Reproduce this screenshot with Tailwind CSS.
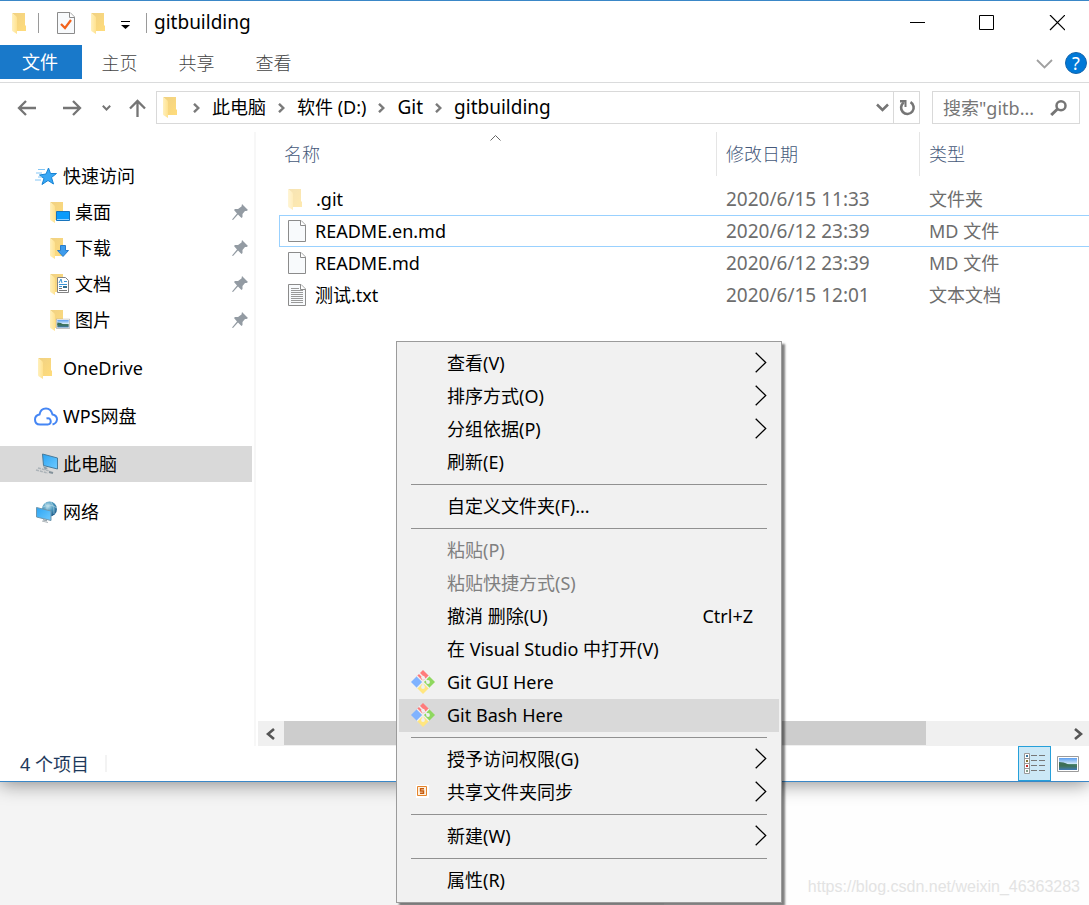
<!DOCTYPE html>
<html lang="zh-CN">
<head>
<meta charset="utf-8">
<title>gitbuilding</title>
<script src="https://cdn.jsdelivr.net/npm/@tailwindcss/browser@4"></script>
</head>
<body class="relative min-h-screen overflow-x-hidden bg-[linear-gradient(to_right,#f4f4f4_664px,#fefefe_664px)] font-['Noto_Sans','Noto_Sans_CJK_SC',sans-serif] text-[18px] leading-6 text-black">

<svg class="absolute h-0 w-0" aria-hidden="true">
  <defs>
    <linearGradient id="gold" x1="0" x2="1" y1="0" y2="1"><stop offset="0" stop-color="#f0d184"/><stop offset="1" stop-color="#ffdc7b"/></linearGradient>
    <linearGradient id="flap" x1="0" x2="1"><stop offset="0" stop-color="#fff0bd"/><stop offset="1" stop-color="#ffe28f"/></linearGradient>
    <linearGradient id="sky" x1="0" x2="1" y1="0" y2="1"><stop offset="0" stop-color="#2ba4f3"/><stop offset="1" stop-color="#6fcaff"/></linearGradient>
    <linearGradient id="photo" x1="0" x2="0" y1="0" y2="1"><stop offset="0" stop-color="#5b9ef0"/><stop offset=".5" stop-color="#d8ecfa"/><stop offset=".51" stop-color="#4f8a72"/><stop offset=".7" stop-color="#3f7360"/><stop offset="1" stop-color="#3f79b8"/></linearGradient>
    <radialGradient id="globe" cx=".4" cy=".3" r=".7"><stop offset="0" stop-color="#c5e4f0"/><stop offset=".5" stop-color="#4e9bc0"/><stop offset="1" stop-color="#1d5d8c"/></radialGradient>
    <symbol id="folder" viewBox="0 0 14 21"><path d="M0 0H13V12L14 13V18H4V4Z" fill="url(#gold)"/><path d="M0 0L4 3Q5 4 5 5V21L1 18.500Q0 18 0 17Z" fill="url(#flap)"/></symbol>
    <symbol id="page" viewBox="0 0 18 22"><path d="M.5.5H13L17.500 5V21.500H.5Z" fill="#f8fafc" stroke="#8b8b8b"/><path d="M12.500.5V5.500H17.500" fill="#fff" stroke="#8b8b8b"/></symbol>
    <symbol id="pin" viewBox="0 0 16 16"><path d="M10 0L16 6L14.500 7H13L10.500 10V13L9.500 14L6 10.500L1 16L0 15.500L5 9.500L2 6L3 5H6L9.500 2.500Z" fill="#939ba3"/></symbol>
    <symbol id="crumb" viewBox="0 0 7 10"><path d="M1 .8L5.300 5L1 9.200" fill="none" stroke="#7a7a7a" stroke-width="2.400"/></symbol>
    <symbol id="sub" viewBox="0 0 12 21"><path d="M.7.7L10.700 10.500L.7 20.300" fill="none" stroke="currentColor" stroke-width="1.300"/></symbol>
    <symbol id="git" viewBox="0 0 24 24">
      <path d="M12 0L18 6L12 12L6 6Z" fill="#ff7b7b"/><path d="M18 6L24 12L18 18L12 12Z" fill="#8fd85f"/><path d="M12 12L18 18L12 24L6 18Z" fill="#ffe680"/><path d="M6 6L12 12L6 18L0 12Z" fill="#80b3ff"/>
      <path d="M6 6L18 18M18 6L6 18" stroke="#f0f0f0" stroke-width="1.200"/><path d="M8 3L12 7V17M12 7L17 12" fill="none" stroke="#f0f0f0" stroke-width="1.500"/><circle cx="12" cy="7.500" r="1.800" fill="#f0f0f0"/><circle cx="12" cy="17" r="1.900" fill="#f0f0f0"/><circle cx="17" cy="12" r="1.900" fill="#f0f0f0"/>
    </symbol>
    <symbol id="picture" viewBox="0 0 22 16"><path d="M.5.5H21.500V15.500H.5Z" fill="#fff" stroke="#9b9b9b"/><path d="M2 2H20V14H2Z" fill="url(#photo)"/><path d="M2 6Q8 6 12 9L20 10H2Z" fill="#3d6f58"/></symbol>
  </defs>
</svg>

<section class="flex h-[782px] flex-col border-y border-y-[#3a87c7] bg-white shadow-[0_2px_18px_rgba(0,0,0,0.45)]" aria-label="gitbuilding">
  <header class="flex h-11 shrink-0 items-center pl-3">
    <svg class="h-[21px] w-[14px]"><use href="#folder"/></svg>
    <span class="ml-3 h-5 w-px bg-[#9a9a9a]"></span>
    <button class="ml-[18px]" aria-label="属性"><svg class="h-[22px] w-[18px]"><use href="#page"/><path d="M4 12L8 16L14 8" fill="none" stroke="#f2621b" stroke-width="2.200"/></svg></button>
    <button class="ml-4" aria-label="新建文件夹"><svg class="h-[21px] w-[14px]"><use href="#folder"/></svg></button>
    <button class="ml-4" aria-label="自定义快速访问工具栏"><svg class="mt-1 h-2 w-[9px]"><path d="M0 0H9V1H0ZM0 4H9L4.500 8Z" fill="#000"/></svg></button>
    <span class="ml-4 h-5 w-px bg-[#9a9a9a]"></span>
    <h1 class="ml-[7px] flex-1 pb-0.5 text-[19px]">gitbuilding</h1>
    <div class="flex h-full gap-1.5">
      <button class="flex w-16 items-center justify-center" aria-label="最小化"><svg class="h-4 w-4"><path d="M1 7.500H16" stroke="#000"/></svg></button>
      <button class="flex w-16 items-center justify-center" aria-label="最大化"><svg class="h-4 w-4"><path d="M.5.5H14.500V14.500H.5Z" fill="none" stroke="#000"/></svg></button>
      <button class="flex w-16 items-center justify-center" aria-label="关闭"><svg class="h-4 w-4"><path d="M1 0L16 15M16 0L1 15" stroke="#000" stroke-width="1.200"/></svg></button>
    </div>
  </header>

  <nav class="flex h-[38px] shrink-0 items-start border-b border-[#dadbdc] text-[#444]">
    <button class="h-[34px] w-[82px] bg-[#1979ca] pr-0.5 text-white">文件</button>
    <button class="h-9 w-[77px] pr-0.5 font-light">主页</button>
    <button class="h-9 w-[77px] pr-0.5 font-light">共享</button>
    <button class="h-9 w-[77px] pr-0.5 font-light">查看</button>
    <button class="mt-3.5 mr-3 ml-auto" aria-label="展开功能区"><svg class="h-[10px] w-[17px]"><path d="M1 1L8.500 8.500L16 1" fill="none" stroke="#a0a0a0" stroke-width="1.800"/></svg></button>
    <button class="mt-[7px] mr-[2px] h-[22px] w-[22px] rounded-full border border-[#1565ab] bg-[#0078d7] text-[18px] leading-5 text-white" aria-label="帮助">?</button>
  </nav>

  <div class="flex h-[49px] shrink-0 items-center pr-[9px] pl-[17px]">
    <button aria-label="后退"><svg class="h-4 w-[19px]"><path d="M19 8H2M9 1L2 8L9 15" fill="none" stroke="#757575" stroke-width="2.300"/></svg></button>
    <button class="ml-[27px]" aria-label="前进"><svg class="h-4 w-[19px]"><path d="M0 8H17M10 1L17 8L10 15" fill="none" stroke="#757575" stroke-width="2.300"/></svg></button>
    <button class="ml-5" aria-label="最近浏览的位置"><svg class="h-[6px] w-[9px]"><path d="M.8.8L4.500 4.500L8.200.8" fill="none" stroke="#757575" stroke-width="2"/></svg></button>
    <button class="mr-2.5 ml-[18px]" aria-label="上移"><svg class="h-[18px] w-[17px]"><path d="M8.500 18V2M1 9.500L8.500 2L16 9.500" fill="none" stroke="#757575" stroke-width="2.300"/></svg></button>
    <div class="flex h-[33px] flex-1 items-center gap-3 border border-[#d9d9d9] pl-1.5 [&>a]:pb-0.5">
      <svg class="mr-1 h-[21px] w-[14px]"><use href="#folder"/></svg>
      <svg class="h-[10px] w-[7px]"><use href="#crumb"/></svg>
      <a href="#pc">此电脑</a>
      <svg class="h-[10px] w-[7px]"><use href="#crumb"/></svg>
      <a href="#d">软件 (D:)</a>
      <svg class="h-[10px] w-[7px]"><use href="#crumb"/></svg>
      <a href="#git-dir" class="text-[19px]">Git</a>
      <svg class="h-[10px] w-[7px]"><use href="#crumb"/></svg>
      <a href="#gitbuilding" class="text-[19px]">gitbuilding</a>
      <button class="ml-auto" aria-label="以前的位置"><svg class="-mr-2 h-[9px] w-[13px]"><path d="M1 1.500L6.500 7L12 1.500" fill="none" stroke="#757575" stroke-width="2.500"/></svg></button>
      <button class="flex h-full w-[26px] items-center justify-center border-l border-[#d9d9d9] pl-0.5" aria-label="刷新"><svg class="h-[17px] w-[17px]"><path d="M11.500 3.200A6.300 6.300 0 1 1 4.800 3.500" fill="none" stroke="#757575" stroke-width="2.600"/><path d="M1 1H7.500V8H5.500V3.500H1Z" fill="#757575"/></svg></button>
    </div>
    <form class="ml-3 flex h-[33px] w-[148px] items-center border border-[#d9d9d9] pr-3 pl-2.5">
      <input type="search" aria-label="搜索" placeholder='搜索"gitb...' class="w-0 flex-1 bg-transparent outline-none placeholder:text-[#767676]">
      <svg class="h-4 w-[17px]"><circle cx="11" cy="5.800" r="4.500" fill="none" stroke="#757575" stroke-width="2.500"/><path d="M7.500 9L1.200 15" stroke="#757575" stroke-width="3"/></svg>
    </form>
  </div>

  <div class="flex min-h-0 flex-1">
    <aside class="w-64 shrink-0 border-r-2 border-[#f7f7f7] pt-[26px]">
      <ul class="mr-0.5 [&_a]:flex [&_a]:h-9 [&_a]:items-center">
        <li><a href="#quick" class="pl-[35px]"><svg class="mr-1.5 h-[19px] w-[22px]"><path d="M13.500 1L15.500 6.500H21.500L16.500 10.500L18.500 17L13 13.500L7 17.500L9 11.500L4.500 8L11 7Z" fill="#38a7f5" stroke="#1683d4"/><path d="M3 2.500H10M1 6H7M3 10H7M0 13H6" stroke="#83c6f5"/></svg>快速访问</a></li>
        <li><a href="#desktop" class="pr-1 pl-[50px]"><svg class="mr-[5px] h-[21px] w-5"><use href="#folder" width="14" height="21"/><path d="M6.500 9.500H19.500V18.500H6.500Z" fill="#0a9bfb" stroke="#1874bd"/><path d="M7 17.500H19" stroke="#8fd0ff"/></svg>桌面<svg class="ml-auto h-4 w-4"><use href="#pin"/></svg></a></li>
        <li><a href="#downloads" class="pr-1 pl-[50px]"><svg class="mr-[5px] h-[21px] w-5"><use href="#folder" width="14" height="21"/><path d="M10.500 7.500H15.500V12.500H18.500L13 18.500L7.500 12.500H10.500Z" fill="#3d9bec" stroke="#2b7dca"/></svg>下载<svg class="ml-auto h-4 w-4"><use href="#pin"/></svg></a></li>
        <li><a href="#documents" class="pr-1 pl-[50px]"><svg class="mr-[5px] h-[21px] w-5"><use href="#folder" width="14" height="21"/><path d="M7.500 3.500H15.500L18.500 6.500V18.500H7.500Z" fill="#fff" stroke="#848484"/><path d="M9 9L11 5L12 9M14 7.500H17M9 10.500H17M9 12.500H12" fill="none" stroke="#3994d5"/><path d="M13 12H17V14H13Z" fill="#316e8e"/><path d="M9 14.500H12M9 16.500H17" stroke="#777"/></svg>文档<svg class="ml-auto h-4 w-4"><use href="#pin"/></svg></a></li>
        <li><a href="#pictures" class="pr-1 pl-[50px]"><svg class="mr-[5px] h-[21px] w-5"><use href="#folder" width="14" height="21"/><use href="#picture" x="6" y="8.500" width="14" height="10.500"/></svg>图片<svg class="ml-auto h-4 w-4"><use href="#pin"/></svg></a></li>
        <li class="mt-3"><a href="#onedrive" class="pl-[38px]"><svg class="mr-[11px] h-[21px] w-[14px]"><use href="#folder"/></svg>OneDrive</a></li>
        <li class="mt-3"><a href="#wps" class="pl-[34px]"><svg class="mr-[5px] h-[19px] w-6"><path d="M14 17.500H6Q1 17.500 1 12.500Q1 8.500 5.500 7.500Q6.500 1.500 12 1.500Q17 1.500 18.500 7.500Q23 8.500 23 12.500Q22.500 16.500 18.500 17.500M14 17.500Q17.500 16.500 16.500 13Q15.500 10.500 12.500 11.500" fill="none" stroke="#4586f4" stroke-width="2"/></svg>WPS网盘</a></li>
        <li class="mt-3"><a href="#pc" class="bg-[#d9d9d9] pl-[35px]" aria-current="page"><svg class="mr-1 h-[22px] w-6"><path d="M7.500 1L22.500 5V16L8.500 12.500Z" fill="url(#sky)" stroke="#477b9c"/><path d="M8 13L13 15L10 17" fill="#8c9ba5"/><path d="M3 15L15 18M1 17L13 20" stroke="#acb3b8" stroke-width="1.500" stroke-dasharray="3 1"/><path d="M14 19L18 20" stroke="#83919a" stroke-width="2"/></svg>此电脑</a></li>
        <li class="mt-3"><a href="#network" class="pl-[35px]"><svg class="mr-1 h-[22px] w-6"><circle cx="14.500" cy="8" r="7.500" fill="url(#globe)"/><path d="M10 2Q13 6 12 10M16 1Q20 6 19 13M8 6Q15 2 22 7" fill="none" stroke="#b9dce7" stroke-opacity=".6"/><path d="M1.500 6.500L16 10V19.500L1.500 16Z" fill="url(#sky)" stroke="#6f96ad"/><path d="M8 18L12 19V20.500L8 19.500Z" fill="#9ca7ad"/><path d="M7 20L13 21.500" stroke="#adb5ba"/></svg>网络</a></li>
      </ul>
    </aside>

    <main class="flex min-w-0 flex-1 flex-col pl-0.5">
      <div class="flex-1 overflow-hidden pl-[21px]">
        <table class="w-full table-fixed border-separate border-spacing-0 text-left">
          <thead>
            <tr class="h-11 text-[#46597a] [&>th]:font-light">
              <th class="relative w-[437px] pl-[5px]">名称<svg class="absolute top-[3px] left-[211px] h-[6px] w-[11px]"><path d="M.5 5.500L5.500.5L10.500 5.500" fill="none" stroke="#666"/></svg></th>
              <th class="w-[203px] border-l border-[#e5e5e5] pl-[9px]">修改日期</th>
              <th class="border-l border-[#e5e5e5] pl-[9px]">类型</th>
            </tr>
          </thead>
          <tbody class="[&_td]:h-8 [&_td]:p-0 [&_td]:pl-2.5 [&_td]:text-[#6d6d6d] [&_td:first-child]:pl-[9px] [&_td:first-child]:text-black [&_td:nth-child(2)]:text-[19px]">
            <tr aria-hidden="true"><td colspan="3" class="h-[7px]! leading-[7px]"></td></tr>
            <tr><td><div class="flex items-center gap-3"><svg class="mr-0.5 h-[21px] w-[14px] opacity-60"><use href="#folder"/></svg>.git</div></td><td>2020/6/15 11:33</td><td>文件夹</td></tr>
            <tr class="[&>td]:border-y [&>td]:border-[#99d1ff]"><td class="border-l"><div class="-ml-px flex items-center gap-[9px]"><svg class="h-[22px] w-[18px]"><use href="#page"/></svg>README.en.md</div></td><td>2020/6/12 23:39</td><td>MD 文件</td></tr>
            <tr><td><div class="flex items-center gap-[9px]"><svg class="h-[22px] w-[18px]"><use href="#page"/></svg>README.md</div></td><td>2020/6/12 23:39</td><td>MD 文件</td></tr>
            <tr><td><div class="flex items-center gap-[9px]"><svg class="h-[22px] w-[18px]"><use href="#page"/><path d="M3 4.500H11M3 6.500H15M3 8.500H15M3 10.500H15M3 12.500H15M3 14.500H15M3 16.500H15M3 18.500H15" stroke="#999"/></svg>测试.txt</div></td><td>2020/6/15 12:01</td><td>文本文档</td></tr>
          </tbody>
        </table>
      </div>
      <div class="flex h-[25px] shrink-0 bg-[#f0f0f0]">
        <button class="flex w-[26px] items-center justify-center pr-0.5" aria-label="向左滚动"><svg class="h-3 w-[9px]"><path d="M8 1L2 6L8 11" fill="none" stroke="#555" stroke-width="2.600"/></svg></button>
        <div class="flex-1"><div class="h-6 w-[82%] bg-[#cdcdcd]"></div></div>
        <button class="flex w-[22px] items-center justify-center" aria-label="向右滚动"><svg class="h-3 w-[9px]"><path d="M1 1L7 6L1 11" fill="none" stroke="#555" stroke-width="2.600"/></svg></button>
      </div>
    </main>
  </div>

  <footer class="flex h-[35px] shrink-0 items-center pr-[10px] pl-5 text-[#1e395b]">
    <span>4 个项目</span><span class="ml-4 h-[17px] w-0.5 bg-[#f3f3f3]"></span>
    <button class="ml-auto flex h-[35px] w-[33px] items-center justify-center border border-[#26a0da] bg-[#cce8f6]" aria-label="详细信息"><svg class="h-[21px] w-[21px]"><path d="M.5.5H5.500V20.500H.5ZM0 5.500H6M0 10.500H6M0 15.500H6" fill="#fff" stroke="#999"/><path d="M2 3H4" stroke="#35759e" stroke-width="2"/><path d="M2 8H4" stroke="#857435" stroke-width="2"/><path d="M2 13H4" stroke="#c52b2b" stroke-width="2"/><path d="M2 18H4" stroke="#83a08a" stroke-width="2"/><path d="M7 2.500H13M15 2.500H21M7 7.500H13M15 7.500H21M7 12.500H13M15 12.500H21M7 17.500H13M15 17.500H21" stroke="#777"/></svg></button>
    <button class="ml-1.5" aria-label="大缩略图"><svg class="h-4 w-[22px]"><use href="#picture"/></svg></button>
  </footer>
</section>

<div role="menu" class="absolute top-[341px] left-[396px] w-[386px] border border-[#9b9b9b] bg-[#f1f1f1] px-0.5 py-[5px] shadow-[3px_3px_2px_rgba(0,0,0,0.5)] [&>button]:flex [&>button]:h-[33px] [&>button]:w-full [&>button]:items-center [&>button]:pr-3 [&>button]:pb-0.5 [&>button]:pl-12 [&>hr]:mx-3 [&>hr]:my-[5px] [&>hr]:border-[#919191]">
  <button role="menuitem">查看(V)<svg class="ml-auto h-[21px] w-3"><use href="#sub"/></svg></button>
  <button role="menuitem">排序方式(O)<svg class="ml-auto h-[21px] w-3"><use href="#sub"/></svg></button>
  <button role="menuitem">分组依据(P)<svg class="ml-auto h-[21px] w-3"><use href="#sub"/></svg></button>
  <button role="menuitem">刷新(E)</button>
  <hr>
  <button role="menuitem">自定义文件夹(F)...</button>
  <hr>
  <button role="menuitem" disabled class="text-[#808080]">粘贴(P)</button>
  <button role="menuitem" disabled class="text-[#808080]">粘贴快捷方式(S)</button>
  <button role="menuitem">撤消 删除(U)<span class="mr-3.5 ml-auto">Ctrl+Z</span></button>
  <button role="menuitem">在 Visual Studio 中打开(V)</button>
  <button role="menuitem" class="pl-3!"><svg class="mr-3 h-6 w-6"><use href="#git"/></svg>Git GUI Here</button>
  <button role="menuitem" class="bg-[#d9d9d9] pl-3!"><svg class="mr-3 h-6 w-6"><use href="#git"/></svg>Git Bash Here</button>
  <hr>
  <button role="menuitem">授予访问权限(G)<svg class="ml-auto h-[21px] w-3"><use href="#sub"/></svg></button>
  <button role="menuitem" class="pl-[17px]!"><svg class="mr-[18px] h-[13px] w-[13px]"><path d="M0 0H13V13H0Z" fill="#fff"/><path d="M1.500 1.500H10.500V10.500H1.500Z" fill="#fff1df" stroke="#e4842c"/><path d="M8 3.700H4.500V6H7.500V8.300H4" fill="none" stroke="#c65a0d" stroke-width="1.400"/></svg>共享文件夹同步<svg class="ml-auto h-[21px] w-3"><use href="#sub"/></svg></button>
  <hr>
  <button role="menuitem">新建(W)<svg class="ml-auto h-[21px] w-3"><use href="#sub"/></svg></button>
  <hr>
  <button role="menuitem">属性(R)</button>
</div>

<p class="absolute right-[9px] bottom-[6px] font-['Liberation_Sans',sans-serif] text-[16px] text-[#e3e3e3]">https://blog.csdn.net/weixin_46363283</p>
</body>
</html>
